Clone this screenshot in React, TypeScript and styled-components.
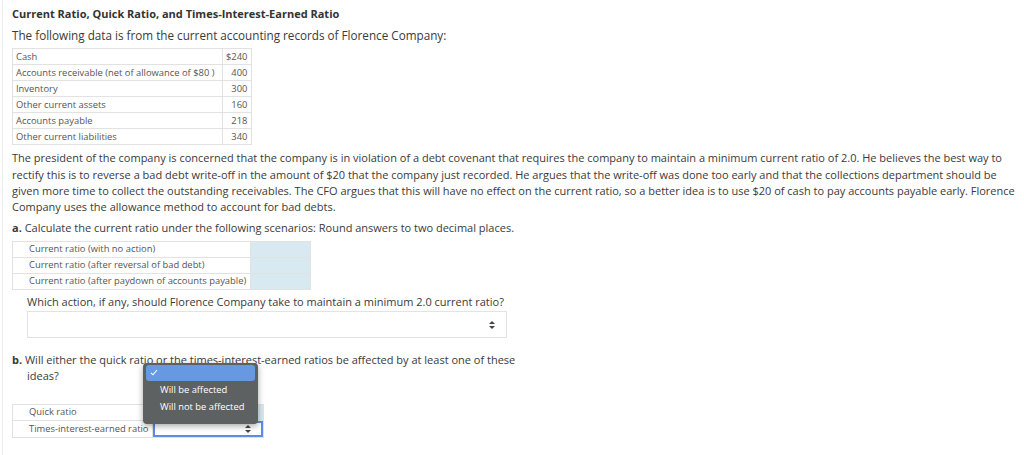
import React from "react";
import styled, { createGlobalStyle } from "styled-components";

const Global = createGlobalStyle`
  html, body { margin: 0; padding: 0; background: #fff; }
  body { font-family: "Open Sans", "Noto Sans", sans-serif; color: #333; }
`;

const Page = styled.div`
  margin-left: 2px;
  border-left: 1px solid #ececec;
  padding: 6px 0 20px 9px;
  min-height: 430px;
  width: 1003px;
`;

const Title = styled.h1`
  margin: 0;
  font-size: 11px;
  line-height: 16px;
  font-weight: 700;
  color: #333;
`;

const Para = styled.p<{ $mt?: number; $indent?: number; $size?: number; $hang?: boolean; $w?: number }>`
  margin: ${(p) => p.$mt ?? 0}px 0 0 ${(p) => p.$indent ?? 0}px;
  font-size: ${(p) => p.$size ?? 11}px;
  line-height: 16.3px;
  color: #3a3a3a;
  ${(p) => (p.$hang ? "padding-left: 15px; text-indent: -15px;" : "")}
  ${(p) => (p.$w ? `width: ${p.$w}px;` : "")}
`;

const DataTable = styled.table<{ $mt?: number }>`
  border-collapse: collapse;
  table-layout: fixed;
  margin-top: ${(p) => p.$mt ?? 0}px;
  font-size: 9.4px;
  color: #555;
`;

const Cell = styled.td<{ $num?: boolean; $pl?: number; $w?: number }>`
  box-sizing: border-box;
  border: 1px solid #e2e2e2;
  height: 16px;
  padding: 0 ${(p) => (p.$num ? 4 : 2)}px 0 ${(p) => p.$pl ?? 3}px;
  text-align: ${(p) => (p.$num ? "right" : "left")};
  white-space: nowrap;
  line-height: 14px;
  overflow: visible;
  ${(p) => (p.$w ? `width: ${p.$w}px;` : "")}
`;

const InputCell = styled.td<{ $w: number }>`
  box-sizing: border-box;
  border: 1px solid #e2e2e2;
  background: #d8e9f1;
  width: ${(p) => p.$w}px;
  height: 16px;
  padding: 0;
`;

const Bold = styled.b`
  font-weight: 700;
`;

const SelectBox = styled.div<{ $w: number; $h: number; $focus?: boolean; $ml?: number; $mt?: number }>`
  box-sizing: border-box;
  width: ${(p) => p.$w}px;
  height: ${(p) => p.$h}px;
  margin: ${(p) => p.$mt ?? 0}px 0 0 ${(p) => p.$ml ?? 0}px;
  border: ${(p) => (p.$focus ? "2px solid #5b8ee2" : "1px solid #e3e3e3")};
  background: #fff;
  display: flex;
  align-items: center;
  justify-content: flex-end;
  padding-right: ${(p) => (p.$focus ? 10 : 11)}px;
`;

const PlainCell = styled.td`
  box-sizing: border-box;
  padding: 0;
  border: 1px solid #e2e2e2;
  width: 110px;
  height: 16px;
`;

const AnchorRow = styled.div`
  position: relative;
`;

const Menu = styled.div`
  position: absolute;
  left: 131px;
  top: -41px;
  width: 115px;
  height: 61px;
  box-sizing: border-box;
  background: #5e6161;
  border-radius: 4px;
  box-shadow: 0 2px 6px rgba(0, 0, 0, 0.35);
  padding: 2px 3px;
  display: flex;
  flex-direction: column;
  z-index: 5;
`;

const MenuItem = styled.div<{ $active?: boolean }>`
  height: ${(p) => (p.$active ? 16 : 17.5)}px;
  border-radius: 3px;
  background: ${(p) => (p.$active ? "#6799e3" : "transparent")};
  color: #fff;
  font-size: 9.4px;
  display: flex;
  align-items: center;
  padding-left: ${(p) => (p.$active ? 4 : 14)}px;
  white-space: nowrap;
`;

const Arrows = () => (
  <svg width="6" height="8" viewBox="0 0 6 8">
    <path d="M3 0 L6 3 L0 3 Z" fill="#444" />
    <path d="M3 8 L6 5 L0 5 Z" fill="#444" />
  </svg>
);

const Check = () => (
  <svg width="8" height="7" viewBox="0 0 8 7">
    <path d="M1 3.8 L3 5.8 L7 1" stroke="#fff" strokeWidth="1.1" fill="none" />
  </svg>
);

const data: [string, string][] = [
  ["Cash", "$240"],
  ["Accounts receivable (net of allowance of $80 )", "400"],
  ["Inventory", "300"],
  ["Other current assets", "160"],
  ["Accounts payable", "218"],
  ["Other current liabilities", "340"],
];

const ratios = [
  "Current ratio (with no action)",
  "Current ratio (after reversal of bad debt)",
  "Current ratio (after paydown of accounts payable)",
];

export default function App() {
  return (
    <>
      <Global />
      <Page>
        <Title>Current Ratio, Quick Ratio, and Times-Interest-Earned Ratio</Title>
        <Para $mt={5} $size={11.7}>The following data is from the current accounting records of Florence Company:</Para>
        <DataTable $mt={5}>
          <tbody>
            {data.map(([k, v]) => (
              <tr key={k}>
                <Cell $w={210}>{k}</Cell>
                <Cell $num $w={26}>{v}</Cell>
              </tr>
            ))}
          </tbody>
        </DataTable>
        <Para $mt={5}>
          The president of the company is concerned that the company is in violation of a debt covenant that requires the company to maintain a minimum current ratio of 2.0. He believes the best way to rectify this is to reverse a bad debt write-off in the amount of $20 that the company just recorded. He argues that the write-off was done too early and that the collections department should be given more time to collect the outstanding receivables. The CFO argues that this will have no effect on the current ratio, so a better idea is to use $20 of cash to pay accounts payable early. Florence Company uses the allowance method to account for bad debts.
        </Para>
        <Para $mt={5}>
          <Bold>a.</Bold> Calculate the current ratio under the following scenarios: Round answers to two decimal places.
        </Para>
        <DataTable $mt={4}>
          <tbody>
            {ratios.map((r) => (
              <tr key={r}>
                <Cell $pl={16} $w={238}>{r}</Cell>
                <InputCell $w={60} />
              </tr>
            ))}
          </tbody>
        </DataTable>
        <Para $mt={4} $indent={15}>
          Which action, if any, should Florence Company take to maintain a minimum 2.0 current ratio?
        </Para>
        <SelectBox $w={480} $h={27} $ml={15} $mt={1}>
          <Arrows />
        </SelectBox>
        <Para $mt={14} $hang $w={507}>
          <Bold>b.</Bold> Will either the quick ratio or the times-interest-earned ratios be affected by at least one of these ideas?
        </Para>
        <AnchorRow>
          <DataTable $mt={19}>
            <tbody>
              <tr>
                <Cell $pl={16} $w={140}>Quick ratio</Cell>
                <InputCell $w={110} />
              </tr>
              <tr>
                <Cell $pl={16} $w={140}>Times-interest-earned ratio</Cell>
                <PlainCell>
                  <SelectBox $w={110} $h={16} $focus>
                    <Arrows />
                  </SelectBox>
                </PlainCell>
              </tr>
            </tbody>
          </DataTable>
          <Menu>
            <MenuItem $active>
              <Check />
            </MenuItem>
            <MenuItem>Will be affected</MenuItem>
            <MenuItem>Will not be affected</MenuItem>
          </Menu>
        </AnchorRow>
      </Page>
    </>
  );
}
